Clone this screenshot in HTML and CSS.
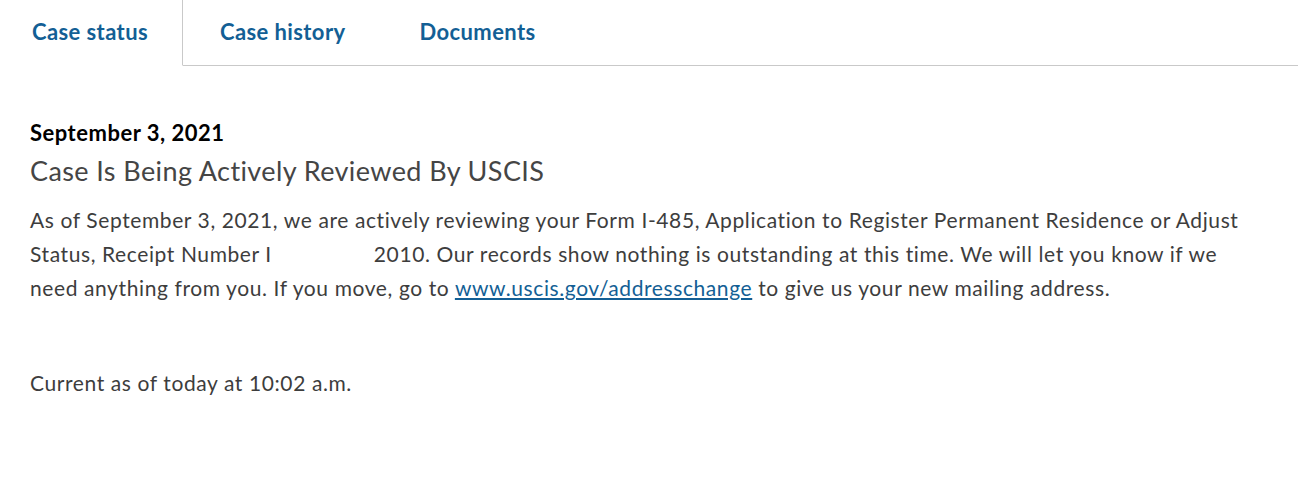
FILE: index.html
```html
<!DOCTYPE html>
<html lang="en">
<head>
  <meta charset="UTF-8">
  <title>Case Status</title>
  <link rel="stylesheet" href="styles.css">
</head>
<body>

  <nav class="tabs">
    <a class="tab active" href="#">Case status</a>
    <a class="tab" href="#">Case history</a>
    <a class="tab" href="#">Documents</a>
    <div class="tab-fill"></div>
  </nav>

  <section class="status">
    <div class="status-date">September 3, 2021</div>
    <h2 class="status-title">Case Is Being Actively Reviewed By USCIS</h2>
    <p class="status-text">
      As of September 3, 2021, we are actively reviewing your Form I-485, Application to Register Permanent Residence or Adjust
      Status, Receipt Number I<span class="redact"></span>2010. Our records show nothing is outstanding at this time. We will let you know if we
      need anything from you. If you move, go to <a href="#">www.uscis.gov/addresschange</a> to give us your new mailing address.
    </p>
    <p class="status-updated">Current as of today at 10:02 a.m.</p>
  </section>

</body>
</html>
```

FILE: styles.css
```css
body {
  font-family: Lato, "Noto Sans", sans-serif;
  background: #fff;
  color: #3d3d3d;
  margin: 0;
}

.tabs {
  display: flex;
  height: 66px;
}

.tab {
  display: flex;
  align-items: center;
  padding: 0 37px 2px;
  font-size: 22px;
  font-weight: 700;
  letter-spacing: 0.4px;
  color: #135f95;
  text-decoration: none;
  border-bottom: 1px solid #c9c9c9;
}

.tab.active {
  padding-left: 32px;
  padding-right: 34px;
  border-right: 1px solid #c9c9c9;
  border-bottom-color: #fff;
}

.tab-fill {
  flex: 1;
  border-bottom: 1px solid #c9c9c9;
}

.status {
  padding: 53px 30px 0;
  max-width: 1230px;
}

.status-date {
  font-size: 22px;
  font-weight: 700;
  letter-spacing: 0.5px;
  color: #000;
}

.status-title {
  margin: 8px 0 0;
  font-size: 27px;
  font-weight: 400;
  letter-spacing: 0.4px;
  color: #454545;
}

.status-text {
  margin: 16px 0 0;
  font-size: 21px;
  letter-spacing: 0.6px;
  line-height: 34px;
}

.status-text a {
  color: #135f95;
}

.redact {
  display: inline-block;
  width: 102px;
}

.status-updated {
  margin: 65px 0 0;
  font-size: 21px;
  letter-spacing: 0.6px;
}
```
